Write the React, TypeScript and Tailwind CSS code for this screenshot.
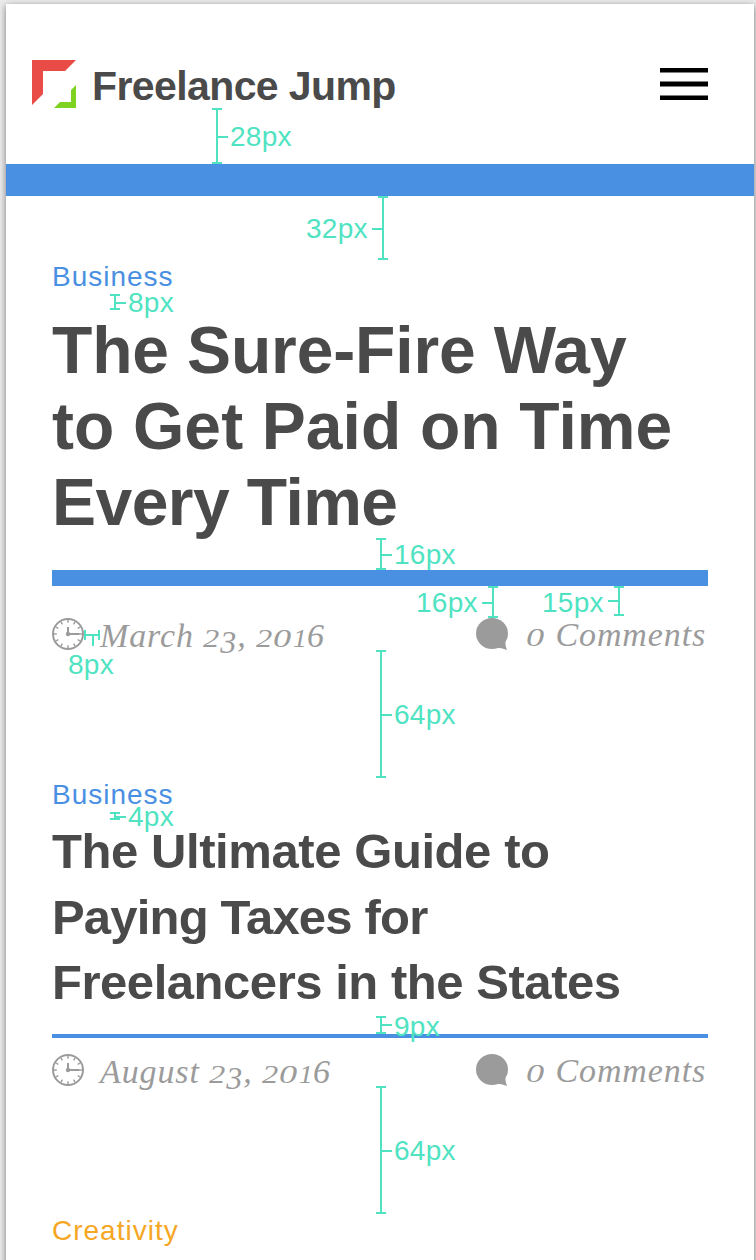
import React from "react";

type MarkerProps = {
  x: number;
  top: number;
  bottom: number;
  tick: number;
  side: "left" | "right";
  label: string;
  labelX: number;
  labelY: number;
};

const markers: MarkerProps[] = [
  { x: 217, top: 108, bottom: 164, tick: 137, side: "right", label: "28px", labelX: 230, labelY: 121 },
  { x: 383, top: 196, bottom: 260, tick: 229, side: "left", label: "32px", labelX: 306, labelY: 213 },
  { x: 115, top: 294, bottom: 310, tick: 303, side: "right", label: "8px", labelX: 128, labelY: 287 },
  { x: 381, top: 538, bottom: 570, tick: 555, side: "right", label: "16px", labelX: 394, labelY: 539 },
  { x: 493, top: 586, bottom: 618, tick: 603, side: "left", label: "16px", labelX: 416, labelY: 587 },
  { x: 619, top: 586, bottom: 616, tick: 601, side: "left", label: "15px", labelX: 542, labelY: 587 },
  { x: 381, top: 650, bottom: 778, tick: 715, side: "right", label: "64px", labelX: 394, labelY: 699 },
  { x: 115, top: 812, bottom: 820, tick: 817, side: "right", label: "4px", labelX: 128, labelY: 801 },
  { x: 381, top: 1016, bottom: 1034, tick: 1025, side: "right", label: "9px", labelX: 394, labelY: 1011 },
  { x: 381, top: 1086, bottom: 1214, tick: 1151, side: "right", label: "64px", labelX: 394, labelY: 1135 },
];

function Label({ x, y, children }: { x: number; y: number; children: React.ReactNode }) {
  return (
    <span
      className="absolute text-[28px] leading-8 tracking-[0.3px] whitespace-nowrap text-[#50e3c2]"
      style={{ left: x, top: y }}
    >
      {children}
    </span>
  );
}

function Marker({ x, top, bottom, tick, side, label, labelX, labelY }: MarkerProps) {
  const h = bottom - top;
  const t = tick - top;
  return (
    <>
      <svg
        className="absolute"
        style={{ left: x - 11, top }}
        width="22"
        height={h}
        fill="none"
        stroke="#50e3c2"
        strokeWidth="2"
      >
        <path d={`M6 1H16M11 1V${h - 1}M6 ${h - 1}H16M11 ${t}H${side === "right" ? 22 : 0}`} />
      </svg>
      <Label x={labelX} y={labelY}>
        {label}
      </Label>
    </>
  );
}

function Logo() {
  return (
    <svg width="44" height="48" viewBox="0 0 44 48">
      <path fill="#e94b47" d="M0 0H44L33 11H11V34L0 45Z" />
      <path fill="#7ed321" d="M44 25V48H22L28 42H39V30Z" />
    </svg>
  );
}

function Clock() {
  return (
    <svg width="32" height="32" viewBox="0 0 32 32" fill="none" stroke="#9b9b9b">
      <circle cx="16" cy="16" r="15" strokeWidth="2" />
      {[0, 30, 60, 90, 120, 150, 180, 210, 240, 270, 300, 330].map((a) => (
        <path key={a} d="M16 2V4.8" strokeWidth="1.4" transform={`rotate(${a} 16 16)`} />
      ))}
      <path d="M16 9V16H27.5" strokeWidth="2" />
      <circle cx="16" cy="16" r="2.2" fill="#9b9b9b" stroke="none" />
    </svg>
  );
}

function Bubble() {
  return (
    <svg width="32" height="32" viewBox="0 0 32 32" fill="#9b9b9b">
      <ellipse cx="16" cy="15.500" rx="16" ry="15.500" />
      <path d="M22 29.700Q26.500 30 31 32Q29.300 28 29.200 23L20 24Z" />
    </svg>
  );
}

/* Old-style figures: 0-2 sit at x-height, 3 descends, 6 ascends. */
function Figures({ value }: { value: string }) {
  return (
    <>
      {value.split("").map((c, i) => {
        if (c === "0") return <span key={i} className="inline-block w-[20px] origin-left scale-x-[1.45] text-[25px] leading-none">{c}</span>;
        if (c === "1") return <span key={i} className="inline-block w-[14px] origin-left scale-x-[1.1] text-[25px] leading-none">{c}</span>;
        if (c === "2") return <span key={i} className="inline-block w-[17px] origin-left scale-x-[1.3] text-[25px] leading-none">{c}</span>;
        if (c === "3") return <span key={i} className="inline-block w-[17px] translate-y-[6px] text-[32px] leading-none">{c}</span>;
        return <span key={i} className="inline-block w-[17px] text-[34px] leading-none">{c}</span>;
      })}
    </>
  );
}

function Meta({ month, day, year }: { month: string; day: string; year: string }) {
  return (
    <div className="flex h-8 justify-between font-['Liberation_Serif',serif] text-[34px] leading-8 text-[#9b9b9b] italic">
      <div className="flex gap-4">
        <Clock />
        <div className="mt-px whitespace-nowrap tracking-[0.9px]">
          {month} <Figures value={day} />, <Figures value={year} />
        </div>
      </div>
      <div className="flex w-[232px] gap-[18px]">
        <Bubble />
        <div className="mt-px whitespace-nowrap tracking-[0.9px]">
          <Figures value="0" /> Comments
        </div>
      </div>
    </div>
  );
}

export default function App() {
  return (
    <div className="relative h-[1260px] w-[756px] overflow-hidden bg-[#ececec] pt-1 pr-0.5 pl-1.5 font-['Liberation_Sans',Arial,sans-serif]">
      <div className="h-[1300px] bg-white shadow-[0_2px_7px_rgba(0,0,0,0.5)]">
        <header className="flex h-40 items-start justify-between pt-14 pr-[46px] pl-[26px]">
          <div className="flex items-start">
            <Logo />
            <span className="ml-[16px] text-[41px] leading-[52px] font-bold tracking-[-0.6px] text-[#4a4a4a]">Freelance Jump</span>
          </div>
          <svg className="mt-2" width="48" height="32" viewBox="0 0 48 32">
            <path d="M0 0H48V4.600H0ZM0 13.400H48V18.600H0ZM0 27.400H48V32H0Z" />
          </svg>
        </header>
        <div className="h-8 bg-[#4a90e2]" />
        <main className="px-[46px] pt-[65px]">
          <article className="mb-[129px]">
            <div className="mb-[19px] h-8 text-[28px] leading-8 tracking-[1px] text-[#4a90e2]">Business</div>
            <h1 className="mb-[30px] text-[66px] leading-[76px] font-bold text-[#4a4a4a]">
              <span className="block tracking-[-0.15px] whitespace-nowrap">The Sure-Fire Way</span>
              <span className="block tracking-[0.1px] whitespace-nowrap">to Get Paid on Time</span>
              <span className="block tracking-[-0.55px] whitespace-nowrap">Every Time</span>
            </h1>
            <div className="mb-8 h-4 bg-[#4a90e2]" />
            <Meta month="March" day="23" year="2016" />
          </article>
          <article className="mb-[129px]">
            <div className="mb-2 h-8 text-[28px] leading-8 tracking-[1px] text-[#4a90e2]">Business</div>
            <h2 className="h-[215px] text-[49px] leading-[65.5px] font-bold text-[#4a4a4a]">
              <span className="block tracking-[-0.42px] whitespace-nowrap">The Ultimate Guide to</span>
              <span className="block tracking-[-0.82px] whitespace-nowrap">Paying Taxes for</span>
              <span className="block tracking-[-0.46px] whitespace-nowrap">Freelancers in the States</span>
            </h2>
            <div className="mb-4 h-1 bg-[#4a90e2]" />
            <Meta month="August" day="23" year="2016" />
          </article>
          <div className="h-8 text-[28px] leading-8 tracking-[1px] text-[#f5a623]">Creativity</div>
        </main>
      </div>
      {markers.map((m) => (
        <Marker key={`${m.x}-${m.top}`} {...m} />
      ))}
      <svg className="absolute top-[630px] left-[84px]" width="16" height="16" fill="none" stroke="#50e3c2" strokeWidth="2">
        <path d="M1 0V10M1 5H15M15 0V10M9 5V16" />
      </svg>
      <Label x={68} y={649}>
        8px
      </Label>
    </div>
  );
}
